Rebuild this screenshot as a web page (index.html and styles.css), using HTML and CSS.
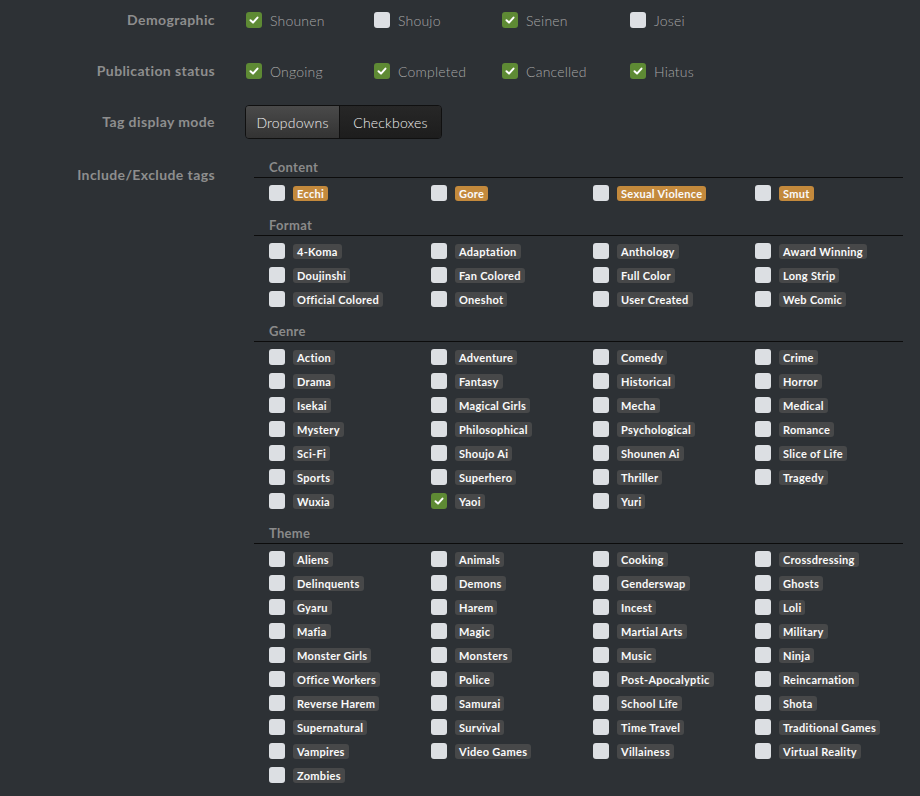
FILE: index.html
```html
<!DOCTYPE html>
<html>
<head>
<meta charset="utf-8">
<link rel="stylesheet" href="styles.css">
</head>
<body>
<div class="form">
  <div class="row row-demo">
    <div class="label">Demographic</div>
    <div class="options">
      <label class="opt"><span class="cb on"><svg viewBox="0 0 16 16"><path d="M4.5 8.3 L7 10.6 L11.5 5.6"/></svg></span>Shounen</label>
      <label class="opt"><span class="cb"></span>Shoujo</label>
      <label class="opt"><span class="cb on"><svg viewBox="0 0 16 16"><path d="M4.5 8.3 L7 10.6 L11.5 5.6"/></svg></span>Seinen</label>
      <label class="opt"><span class="cb"></span>Josei</label>
    </div>
  </div>
  <div class="row row-pub">
    <div class="label">Publication status</div>
    <div class="options">
      <label class="opt"><span class="cb on"><svg viewBox="0 0 16 16"><path d="M4.5 8.3 L7 10.6 L11.5 5.6"/></svg></span>Ongoing</label>
      <label class="opt"><span class="cb on"><svg viewBox="0 0 16 16"><path d="M4.5 8.3 L7 10.6 L11.5 5.6"/></svg></span>Completed</label>
      <label class="opt"><span class="cb on"><svg viewBox="0 0 16 16"><path d="M4.5 8.3 L7 10.6 L11.5 5.6"/></svg></span>Cancelled</label>
      <label class="opt"><span class="cb on"><svg viewBox="0 0 16 16"><path d="M4.5 8.3 L7 10.6 L11.5 5.6"/></svg></span>Hiatus</label>
    </div>
  </div>
  <div class="row row-mode">
    <div class="label">Tag display mode</div>
    <div class="btn-group">
      <button class="btn btn-light">Dropdowns</button><button class="btn btn-dark">Checkboxes</button>
    </div>
  </div>
  <div class="row row-tags">
    <div class="label">Include/Exclude tags</div>
    <div class="tags">
      <div class="section">
        <div class="sec-head">Content</div>
        <div class="grid">
          <div class="tag"><span class="cb"></span><span class="pill warn">Ecchi</span></div>
          <div class="tag"><span class="cb"></span><span class="pill warn">Gore</span></div>
          <div class="tag"><span class="cb"></span><span class="pill warn">Sexual Violence</span></div>
          <div class="tag"><span class="cb"></span><span class="pill warn">Smut</span></div>
        </div>
      </div>
      <div class="section">
        <div class="sec-head">Format</div>
        <div class="grid">
          <div class="tag"><span class="cb"></span><span class="pill">4-Koma</span></div>
          <div class="tag"><span class="cb"></span><span class="pill">Adaptation</span></div>
          <div class="tag"><span class="cb"></span><span class="pill">Anthology</span></div>
          <div class="tag"><span class="cb"></span><span class="pill">Award Winning</span></div>
          <div class="tag"><span class="cb"></span><span class="pill">Doujinshi</span></div>
          <div class="tag"><span class="cb"></span><span class="pill">Fan Colored</span></div>
          <div class="tag"><span class="cb"></span><span class="pill">Full Color</span></div>
          <div class="tag"><span class="cb"></span><span class="pill">Long Strip</span></div>
          <div class="tag"><span class="cb"></span><span class="pill">Official Colored</span></div>
          <div class="tag"><span class="cb"></span><span class="pill">Oneshot</span></div>
          <div class="tag"><span class="cb"></span><span class="pill">User Created</span></div>
          <div class="tag"><span class="cb"></span><span class="pill">Web Comic</span></div>
        </div>
      </div>
      <div class="section">
        <div class="sec-head">Genre</div>
        <div class="grid">
          <div class="tag"><span class="cb"></span><span class="pill">Action</span></div>
          <div class="tag"><span class="cb"></span><span class="pill">Adventure</span></div>
          <div class="tag"><span class="cb"></span><span class="pill">Comedy</span></div>
          <div class="tag"><span class="cb"></span><span class="pill">Crime</span></div>
          <div class="tag"><span class="cb"></span><span class="pill">Drama</span></div>
          <div class="tag"><span class="cb"></span><span class="pill">Fantasy</span></div>
          <div class="tag"><span class="cb"></span><span class="pill">Historical</span></div>
          <div class="tag"><span class="cb"></span><span class="pill">Horror</span></div>
          <div class="tag"><span class="cb"></span><span class="pill">Isekai</span></div>
          <div class="tag"><span class="cb"></span><span class="pill">Magical Girls</span></div>
          <div class="tag"><span class="cb"></span><span class="pill">Mecha</span></div>
          <div class="tag"><span class="cb"></span><span class="pill">Medical</span></div>
          <div class="tag"><span class="cb"></span><span class="pill">Mystery</span></div>
          <div class="tag"><span class="cb"></span><span class="pill">Philosophical</span></div>
          <div class="tag"><span class="cb"></span><span class="pill">Psychological</span></div>
          <div class="tag"><span class="cb"></span><span class="pill">Romance</span></div>
          <div class="tag"><span class="cb"></span><span class="pill">Sci-Fi</span></div>
          <div class="tag"><span class="cb"></span><span class="pill">Shoujo Ai</span></div>
          <div class="tag"><span class="cb"></span><span class="pill">Shounen Ai</span></div>
          <div class="tag"><span class="cb"></span><span class="pill">Slice of Life</span></div>
          <div class="tag"><span class="cb"></span><span class="pill">Sports</span></div>
          <div class="tag"><span class="cb"></span><span class="pill">Superhero</span></div>
          <div class="tag"><span class="cb"></span><span class="pill">Thriller</span></div>
          <div class="tag"><span class="cb"></span><span class="pill">Tragedy</span></div>
          <div class="tag"><span class="cb"></span><span class="pill">Wuxia</span></div>
          <div class="tag"><span class="cb on"><svg viewBox="0 0 16 16"><path d="M4.5 8.3 L7 10.6 L11.5 5.6"/></svg></span><span class="pill">Yaoi</span></div>
          <div class="tag"><span class="cb"></span><span class="pill">Yuri</span></div>
        </div>
      </div>
      <div class="section">
        <div class="sec-head">Theme</div>
        <div class="grid">
          <div class="tag"><span class="cb"></span><span class="pill">Aliens</span></div>
          <div class="tag"><span class="cb"></span><span class="pill">Animals</span></div>
          <div class="tag"><span class="cb"></span><span class="pill">Cooking</span></div>
          <div class="tag"><span class="cb"></span><span class="pill">Crossdressing</span></div>
          <div class="tag"><span class="cb"></span><span class="pill">Delinquents</span></div>
          <div class="tag"><span class="cb"></span><span class="pill">Demons</span></div>
          <div class="tag"><span class="cb"></span><span class="pill">Genderswap</span></div>
          <div class="tag"><span class="cb"></span><span class="pill">Ghosts</span></div>
          <div class="tag"><span class="cb"></span><span class="pill">Gyaru</span></div>
          <div class="tag"><span class="cb"></span><span class="pill">Harem</span></div>
          <div class="tag"><span class="cb"></span><span class="pill">Incest</span></div>
          <div class="tag"><span class="cb"></span><span class="pill">Loli</span></div>
          <div class="tag"><span class="cb"></span><span class="pill">Mafia</span></div>
          <div class="tag"><span class="cb"></span><span class="pill">Magic</span></div>
          <div class="tag"><span class="cb"></span><span class="pill">Martial Arts</span></div>
          <div class="tag"><span class="cb"></span><span class="pill">Military</span></div>
          <div class="tag"><span class="cb"></span><span class="pill">Monster Girls</span></div>
          <div class="tag"><span class="cb"></span><span class="pill">Monsters</span></div>
          <div class="tag"><span class="cb"></span><span class="pill">Music</span></div>
          <div class="tag"><span class="cb"></span><span class="pill">Ninja</span></div>
          <div class="tag"><span class="cb"></span><span class="pill">Office Workers</span></div>
          <div class="tag"><span class="cb"></span><span class="pill">Police</span></div>
          <div class="tag"><span class="cb"></span><span class="pill">Post-Apocalyptic</span></div>
          <div class="tag"><span class="cb"></span><span class="pill">Reincarnation</span></div>
          <div class="tag"><span class="cb"></span><span class="pill">Reverse Harem</span></div>
          <div class="tag"><span class="cb"></span><span class="pill">Samurai</span></div>
          <div class="tag"><span class="cb"></span><span class="pill">School Life</span></div>
          <div class="tag"><span class="cb"></span><span class="pill">Shota</span></div>
          <div class="tag"><span class="cb"></span><span class="pill">Supernatural</span></div>
          <div class="tag"><span class="cb"></span><span class="pill">Survival</span></div>
          <div class="tag"><span class="cb"></span><span class="pill">Time Travel</span></div>
          <div class="tag"><span class="cb"></span><span class="pill">Traditional Games</span></div>
          <div class="tag"><span class="cb"></span><span class="pill">Vampires</span></div>
          <div class="tag"><span class="cb"></span><span class="pill">Video Games</span></div>
          <div class="tag"><span class="cb"></span><span class="pill">Villainess</span></div>
          <div class="tag"><span class="cb"></span><span class="pill">Virtual Reality</span></div>
          <div class="tag"><span class="cb"></span><span class="pill">Zombies</span></div>
        </div>
      </div>
    </div>
  </div>
</div>
</body>
</html>
```

FILE: styles.css
```css
html, body {
  margin: 0;
  padding: 0;
  background: #2d3135;
}
body {
  font-family: Lato, "Open Sans", "DejaVu Sans", sans-serif;
  color: #a8a8a8;
  width: 920px;
  height: 796px;
  overflow: hidden;
}
.form {
  display: flex;
  flex-direction: column;
}
.row {
  display: grid;
  grid-template-columns: 215px 1fr;
  column-gap: 31px;
}
.label {
  text-align: right;
  font-weight: 700;
  font-size: 14px;
  color: #8e8e8e;
  letter-spacing: 0.4px;
}
.row-demo { margin-top: 4px; }
.row-demo .label, .row-pub .label { line-height: 32px; }
.row-pub { margin-top: 19px; }
.row-mode { margin-top: 18px; }
.row-mode .label { line-height: 34px; }
.row-tags { margin-top: 18px; }
.row-tags .label { line-height: 20px; padding-top: 8px; }

.options {
  display: flex;
  align-items: center;
  height: 32px;
}
.opt {
  width: 128px;
  display: flex;
  align-items: center;
  gap: 8px;
  font-size: 14px;
  font-weight: 300;
  color: #a6a6a6;
  letter-spacing: 0.2px;
}
.cb {
  width: 16px;
  height: 16px;
  border-radius: 3px;
  background: #dcdfe3;
  flex: none;
  display: flex;
  align-items: center;
  justify-content: center;
}
.cb.on { background: #5e8a34; }
.cb svg {
  width: 16px;
  height: 16px;
  fill: none;
  stroke: #fff;
  stroke-width: 2;
  stroke-linecap: round;
  stroke-linejoin: round;
}

.btn-group {
  display: flex;
  height: 34px;
  width: max-content;
  margin-left: -1px;
  border: 1px solid #101010;
  border-radius: 4px;
  overflow: hidden;
  box-sizing: border-box;
}
.btn {
  font-family: inherit;
  font-size: 14px;
  font-weight: 300;
  color: #f0f0f0;
  border: 0;
  margin: 0;
  height: 100%;
  letter-spacing: 0.2px;
}
.btn-light {
  width: 94px;
  background: linear-gradient(#4a4a4a, #333333);
  border-right: 1px solid #101010;
}
.btn-dark {
  width: 101px;
  background: linear-gradient(#272727, #1d1d1d);
}

.tags {
  margin-left: 8px;
  width: 649px;
}
.section + .section { margin-top: 10px; }
.sec-head {
  font-size: 13px;
  font-weight: 700;
  color: #8a8a8a;
  line-height: 20px;
  padding-left: 15px;
  border-bottom: 1px solid #0c0c0c;
  letter-spacing: 0.3px;
}
.grid {
  display: grid;
  grid-template-columns: repeat(4, 162px);
  grid-auto-rows: 24px;
  padding-left: 15px;
  padding-top: 3px;
}
.tag {
  display: flex;
  align-items: center;
  gap: 8px;
}
.pill {
  background: #474849;
  color: #fafafa;
  font-size: 11px;
  font-weight: 700;
  line-height: 15px;
  height: 15px;
  padding: 0 4px;
  border-radius: 3px;
  letter-spacing: 0.3px;
}
.pill.warn { background: #c3893c; }
```
